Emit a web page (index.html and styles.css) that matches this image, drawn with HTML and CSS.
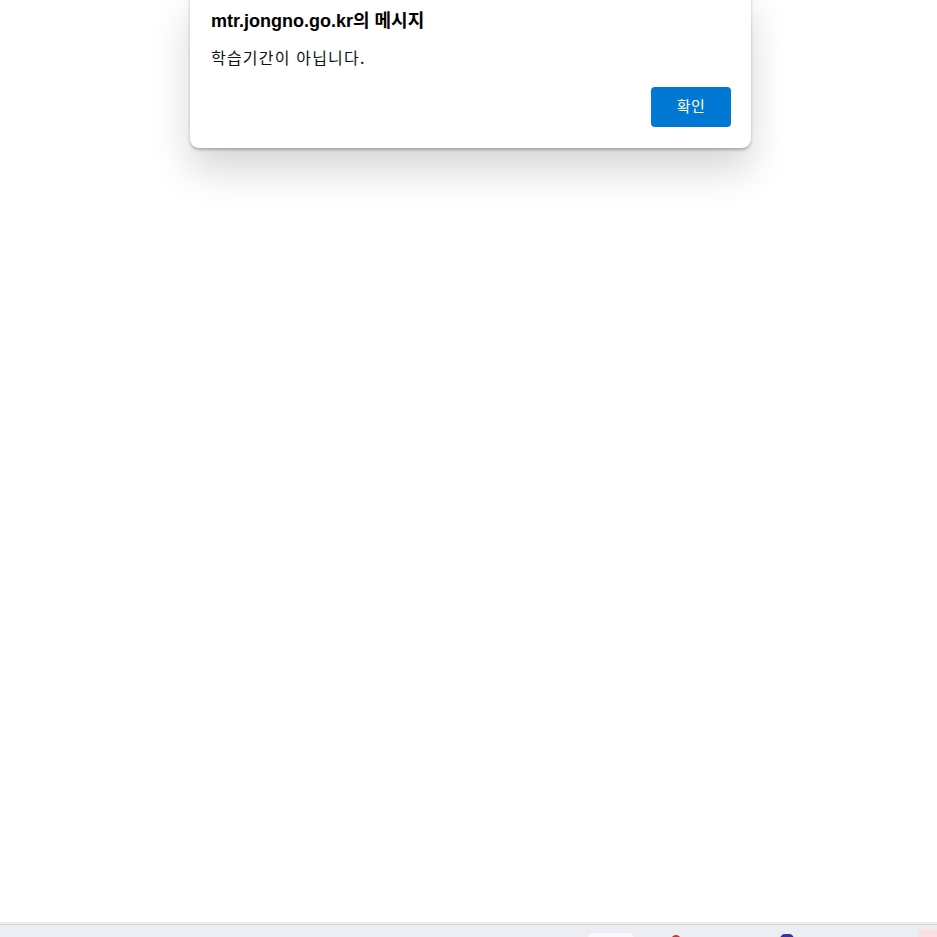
FILE: index.html
```html
<!DOCTYPE html>
<html lang="ko">
<head>
    <meta charset="UTF-8">
    <meta name="viewport" content="width=device-width, initial-scale=1.0">
    <title>mtr.jongno.go.kr</title>
    <link rel="stylesheet" href="styles.css">
</head>
<body>
    <div class="page">
        <div class="dialog">
            <h2 class="dialog-title">mtr.jongno.go.kr의 메시지</h2>
            <p class="dialog-text">학습기간이 아닙니다.</p>
            <div class="dialog-actions">
                <button type="button">확인</button>
            </div>
        </div>
        <div class="taskbar">
            <span class="tb-item tb-white"></span>
            <span class="tb-item tb-red"></span>
            <span class="tb-item tb-blue"></span>
            <span class="tb-item tb-pink"></span>
        </div>
    </div>
</body>
</html>
```

FILE: styles.css
```css
/* Basic styling */
body {
    margin: 0;
    font-family: "Noto Sans CJK KR", "Noto Sans", sans-serif;
    background: #fff;
}
.page {
    height: 937px;
    display: flex;
    flex-direction: column;
    justify-content: space-between;
    overflow: hidden;
}
.dialog {
    width: 561px;
    box-sizing: border-box;
    margin-left: 190px;
    margin-top: -10px;
    padding: 18px 20px 21px 21px;
    background: #fff;
    border-radius: 0 0 9px 9px;
    box-shadow: 0 2px 3px rgba(0, 0, 0, 0.25), 0 22px 38px rgba(0, 0, 0, 0.16);
}
.dialog-title {
    margin: 0;
    font-family: "Liberation Sans", "Noto Sans CJK KR", sans-serif;
    font-size: 18px;
    font-weight: bold;
    line-height: 26px;
    color: #000;
}
.dialog-text {
    margin: 12px 0 0;
    font-size: 16px;
    letter-spacing: 1.2px;
    line-height: 22px;
    color: #111;
}
.dialog-actions {
    display: flex;
    justify-content: flex-end;
    margin-top: 19px;
}
button {
    width: 80px;
    height: 40px;
    padding: 0 0 4px;
    background-color: #0078d4;
    color: white;
    border: none;
    border-radius: 4px;
    font-family: "Noto Sans CJK KR", sans-serif;
    font-size: 15px;
    letter-spacing: 0.5px;
    cursor: pointer;
}
.taskbar {
    height: 12px;
    border-top: 1px solid #d6d6d6;
    box-shadow: 0 -2px 0 #eeeeee;
    background: #eceef3;
    position: relative;
}
.tb-item {
    position: absolute;
    top: 8px;
    height: 10px;
    border-radius: 5px;
}
.tb-white { left: 588px; width: 46px; background: #fafafa; }
.tb-red { left: 671px; width: 10px; background: #c9363c; top: 10px; }
.tb-blue { left: 780px; width: 14px; background: #3c2f9f; top: 9px; }
.tb-pink { left: 918px; width: 24px; background: #fbe1e4; top: 4px; }
```
